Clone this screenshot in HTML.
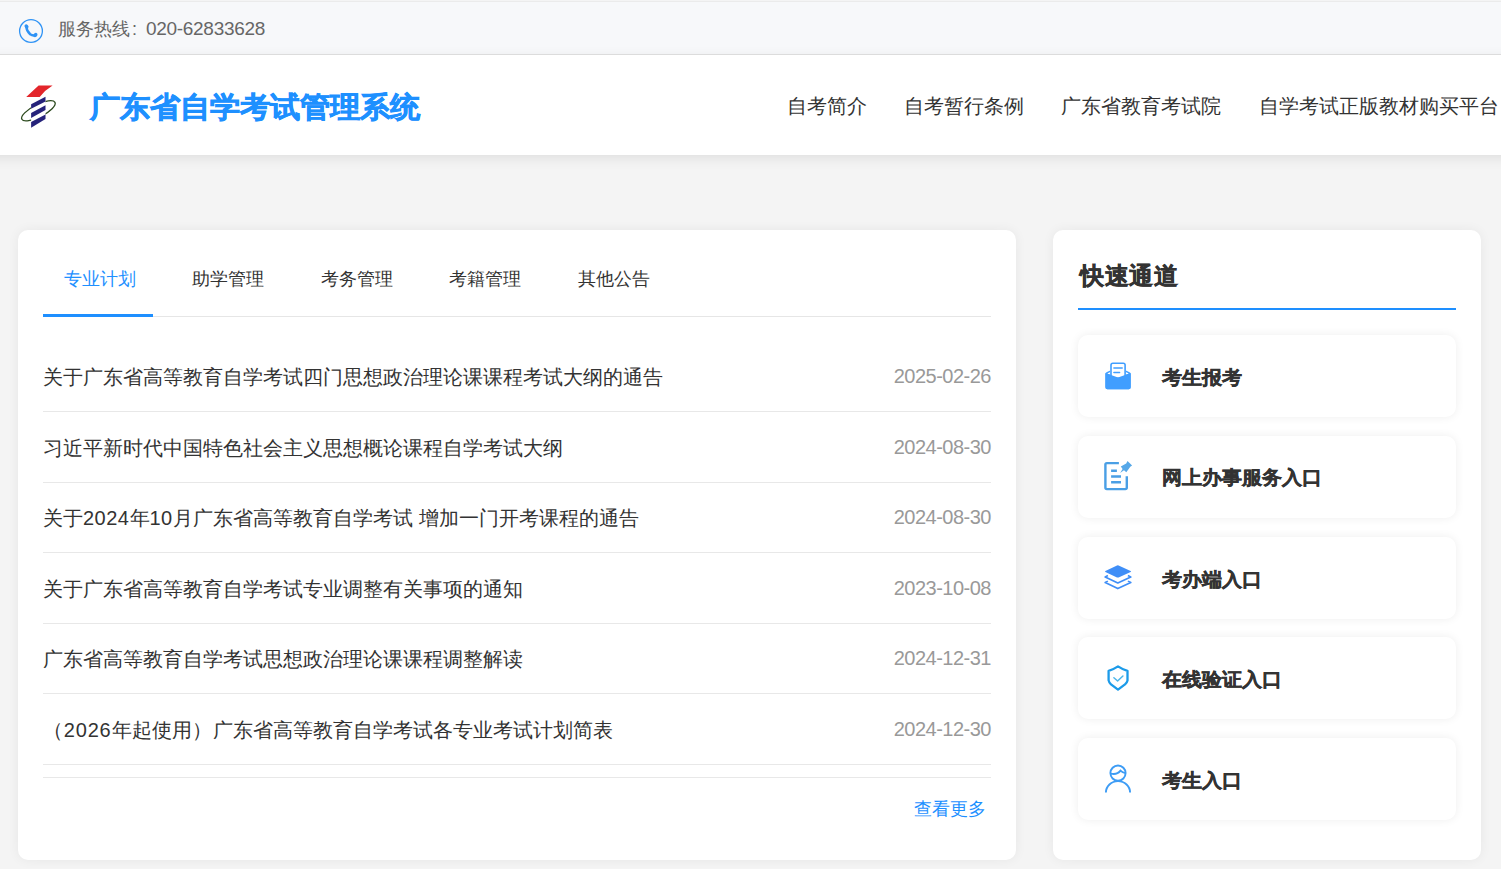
<!DOCTYPE html>
<html><head><meta charset="utf-8">
<style>
*{margin:0;padding:0;box-sizing:border-box;}
html,body{width:1501px;height:869px;overflow:hidden;background:#f4f4f4;font-family:"Liberation Sans",sans-serif;}
.topbar{position:absolute;left:0;top:0;width:1501px;height:55px;background:#f7f8fa;border-top:2px solid #ebebeb;border-bottom:1px solid #e2e2e2;}
.phone{position:absolute;left:18px;top:16px;width:26px;height:26px;}
.hot{position:absolute;left:58px;top:14.5px;font-size:18px;line-height:24px;color:#666;white-space:nowrap;}
.header{position:absolute;left:0;top:55px;width:1501px;height:100px;background:#fff;}
.hshadow{position:absolute;left:-30px;top:55px;width:1561px;height:100px;background:#fff;box-shadow:0 3px 12px rgba(0,0,0,0.09);}

.title{position:absolute;left:90px;top:34px;transform:scaleY(0.96);font-size:30px;line-height:36px;font-weight:bold;color:#1e90ff;-webkit-text-stroke:0.7px #1e90ff;white-space:nowrap;}
.nav{position:absolute;top:38px;font-size:20px;line-height:26px;color:#333;white-space:nowrap;}
.card{position:absolute;background:#fff;border-radius:10px;box-shadow:0 0 12px rgba(0,0,0,0.06);}
.left{left:18px;top:230px;width:998px;height:630px;}
.right{left:1053px;top:230px;width:428px;height:630px;}
.tab{position:absolute;top:37px;font-size:18px;line-height:24px;color:#333;white-space:nowrap;}
.tab.on{color:#1e90ff;}
.tabline{position:absolute;left:25px;top:86px;width:948px;height:1px;background:#e6e6e6;}
.tabact{position:absolute;left:25px;top:84px;width:110px;height:3px;background:#1e8fff;}
.row{position:absolute;left:25px;width:948px;height:1px;background:#e8e8e8;}
.it{position:absolute;left:25px;margin-top:1px;font-size:20px;line-height:26px;color:#333;white-space:nowrap;}
.dt{position:absolute;right:25px;margin-top:-0.5px;letter-spacing:-0.5px;font-size:20px;line-height:26px;color:#999;white-space:nowrap;}
.more{position:absolute;right:30px;top:566.5px;font-size:18px;line-height:24px;color:#1e90ff;}
.qh{position:absolute;left:27px;top:30px;letter-spacing:0.5px;font-size:24px;line-height:32px;font-weight:bold;color:#333;-webkit-text-stroke:0.5px #333;}
.qline{position:absolute;left:25px;top:78px;width:378px;height:2px;background:#1e8fff;}
.qi{position:absolute;left:25px;width:378px;height:82px;background:#fff;border-radius:10px;box-shadow:0 0 10px rgba(0,0,0,0.07);}
.qi svg{position:absolute;left:20px;top:20px;width:40px;height:40px;}
.qi span{position:absolute;left:84px;top:29px;transform:scaleY(0.95);font-size:20px;line-height:26px;font-weight:bold;color:#333;-webkit-text-stroke:0.4px #333;white-space:nowrap;}
</style></head><body>
<div class="topbar"><div style="position:absolute;left:0;top:-2px;width:1501px;height:1px;background:#f4f4f4"></div>
  <svg class="phone" viewBox="0 0 26 26"><circle cx="13" cy="13" r="11.4" fill="none" stroke="#2f93f5" stroke-width="1.3"/><path d="M8.4 8.8 Q8.6 13.3 12.2 16.3 Q14.6 17.9 17.4 17.2" fill="none" stroke="#2f93f5" stroke-width="2.5" stroke-linecap="round"/><ellipse cx="8.5" cy="8.4" rx="1.8" ry="2.3" transform="rotate(-40 8.5 8.4)" fill="#2f93f5"/><ellipse cx="17.4" cy="17" rx="2.3" ry="1.8" transform="rotate(-40 17.4 17)" fill="#2f93f5"/></svg>
  <div class="hot">服务热线<span style="display:inline-block;width:16px;padding-left:2px">:</span><span style="font-size:19px;letter-spacing:-0.3px">020-62833628</span></div>
</div>
<div class="hshadow"></div>
<div class="header">
  <svg class="logo" viewBox="0 0 70 100" style="position:absolute;left:0;top:0;width:70px;height:100px">
<g transform="translate(0,-55)">
<path d="M38.6 85.5 L52.6 85.5 Q45 90 39.7 97 L26.2 97 Z" fill="#e3262b"/>
<ellipse cx="38.4" cy="110.8" rx="18.6" ry="6.2" transform="rotate(-27 38.4 110.8)" fill="none" stroke="#2c4a1e" stroke-width="1.3"/><rect x="31.1" y="97.3" width="14.4" height="32" fill="#fff"/><path d="M45.5 96.7 L45.5 101.6 L31.1 108.8 L31.1 104.2 Z" fill="#26237a"/>
<path d="M45.5 105.3 L45.5 109.9 L31.1 118 L31.1 113.1 Z" fill="#26237a"/>
<path d="M45.5 114.5 L45.5 119.1 L31.1 127.8 L31.1 122 Z" fill="#26237a"/>

</g></svg>
  <div class="title">广东省自学考试管理系统</div>
  <div class="nav" style="left:787px">自考简介</div>
  <div class="nav" style="left:904px">自考暂行条例</div>
  <div class="nav" style="left:1061px">广东省教育考试院</div>
  <div class="nav" style="left:1259px">自学考试正版教材购买平台</div>
</div>
<div class="card left">
  <div class="tab on" style="left:46px">专业计划</div>
  <div class="tab" style="left:174px">助学管理</div>
  <div class="tab" style="left:303px">考务管理</div>
  <div class="tab" style="left:431px">考籍管理</div>
  <div class="tab" style="left:560px">其他公告</div>
  <div class="tabline"></div>
  <div class="tabact"></div>
  <div class="it" style="top:133px">关于广东省高等教育自学考试四门思想政治理论课课程考试大纲的通告</div><div class="dt" style="top:133px">2025-02-26</div>
  <div class="row" style="top:181px"></div>
  <div class="it" style="top:204px">习近平新时代中国特色社会主义思想概论课程自学考试大纲</div><div class="dt" style="top:204px">2024-08-30</div>
  <div class="row" style="top:252px"></div>
  <div class="it" style="top:274px">关于<span style="letter-spacing:0.5px">2024</span>年<span style="letter-spacing:0.5px">10</span>月广东省高等教育自学考试<span style="letter-spacing:1px"> </span>增加一门开考课程的通告</div><div class="dt" style="top:274px">2024-08-30</div>
  <div class="row" style="top:322px"></div>
  <div class="it" style="top:345px">关于广东省高等教育自学考试专业调整有关事项的通知</div><div class="dt" style="top:345px">2023-10-08</div>
  <div class="row" style="top:393px"></div>
  <div class="it" style="top:415px">广东省高等教育自学考试思想政治理论课课程调整解读</div><div class="dt" style="top:415px">2024-12-31</div>
  <div class="row" style="top:463px"></div>
  <div class="it" style="top:486px"><span style="letter-spacing:0.8px">（2026</span>年起使用<span style="letter-spacing:1px">）</span>广东省高等教育自学考试各专业考试计划简表</div><div class="dt" style="top:486px">2024-12-30</div>
  <div class="row" style="top:534px"></div>
  <div class="row" style="top:547px"></div>
  <div class="more">查看更多</div>
</div>
<div class="card right">
  <div class="qh">快速通道</div>
  <div class="qline"></div>
  <div class="qi" style="top:105px"><svg viewBox="0 0 40 40"><path d="M7.4 19 Q7.4 17.5 9 17 L12.2 15.6 L12.2 22.4 L20 22.4 L27.9 22.4 L27.9 15.6 L31 17 Q32.7 17.5 32.7 19 L32.7 32.3 Q32.7 34.3 30.7 34.3 L9.4 34.3 Q7.4 34.3 7.4 32.3 Z" fill="#409eff"/>
<path d="M9.2 18.5 L12.4 16.9 L12.4 19.7 Z M30.9 18.5 L27.7 16.9 L27.7 19.7 Z" fill="#fff"/><path d="M13 21.5 L13 10 Q13 8.2 14.8 8.2 L25.3 8.2 Q27.1 8.2 27.1 10 L27.1 21.5" fill="#fff" stroke="#409eff" stroke-width="1.6"/>
<path d="M7.4 18 L20 22.6 L32.7 18 L32.7 32.3 Q32.7 34.3 30.7 34.3 L9.4 34.3 Q7.4 34.3 7.4 32.3 Z" fill="#409eff"/>
<path d="M15.9 12.9 L24.2 12.9 M15.9 17.4 L21.6 17.4" stroke="#409eff" stroke-width="1.5" stroke-linecap="round"/></svg><span>考生报考</span></div>
  <div class="qi" style="top:205.75px"><svg viewBox="0 0 40 40"><path d="M20.9 7.1 L8.9 7.1 Q7.4 7.1 7.4 8.6 L7.4 31.6 Q7.4 33.1 8.9 33.1 L27.3 33.1 Q28.8 33.1 28.8 31.6 L28.8 20.3" fill="none" stroke="#4a9fe5" stroke-width="2.4"/>
<path d="M13.1 14.8 L18.9 14.8 M13.1 20.5 L23 20.5 M13.1 26.3 L23 26.3" stroke="#4a9fe5" stroke-width="2.4"/>
<path d="M29.5 5.1 L34.1 9.4 L32.3 10.8 L28.3 16.3 L26 14.3 L22.1 16.9 L24.6 13 L22.8 10.6 L28.2 7.5 Z" fill="#56a8e8"/></svg><span style="top:28.25px">网上办事服务入口</span></div>
  <div class="qi" style="top:306.5px"><svg viewBox="0 0 40 40"><path d="M7.2 14.5 Q6.4 14.5 7.4 14 L19 8.4 Q19.8 8 20.6 8.4 L32.6 14 Q33.6 14.5 32.6 15 L20.6 20.4 Q19.8 20.8 19 20.4 L7.4 15 Z" fill="#3f8ef7"/>
<path d="M9.9 18.6 L7.2 20 L19.8 26 L32.8 20 L29.9 18.6" fill="none" stroke="#3f8ef7" stroke-width="1.7" stroke-linejoin="round"/>
<path d="M9.9 24.2 L7.2 25.6 L19.8 31.6 L32.8 25.6 L29.9 24.2" fill="none" stroke="#3f8ef7" stroke-width="1.7" stroke-linejoin="round"/></svg><span>考办端入口</span></div>
  <div class="qi" style="top:407.25px"><svg viewBox="0 0 40 40" style="top:21px"><path d="M20 8.4 Q15.5 11.5 10.6 12.8 L10.6 22.4 Q11 24.5 13 26.4 L20 31.6 L27 26.4 Q29 24.5 29.5 22.4 L29.5 12.8 Q24.5 11.5 20 8.4 Z" fill="none" stroke="#1c9be9" stroke-width="2.3" stroke-linejoin="round"/>
<path d="M15.9 19.8 L19.6 23 L24.9 18" fill="none" stroke="#4cb6ea" stroke-width="1.5" stroke-linecap="round" stroke-linejoin="round"/></svg><span>在线验证入口</span></div>
  <div class="qi" style="top:508px"><svg viewBox="0 0 40 40" style="top:21px"><circle cx="20" cy="14.1" r="7.6" fill="none" stroke="#3d9cf5" stroke-width="1.9"/>
<path d="M12.6 14.6 Q19 16.2 22.5 11.6 Q24.5 13.6 27.4 14" fill="none" stroke="#3d9cf5" stroke-width="1.9"/>
<path d="M7.9 33.6 A12.1 11.5 0 0 1 32.1 33.6" fill="none" stroke="#3d9cf5" stroke-width="1.9"/></svg><span>考生入口</span></div>
</div>
</body></html>
